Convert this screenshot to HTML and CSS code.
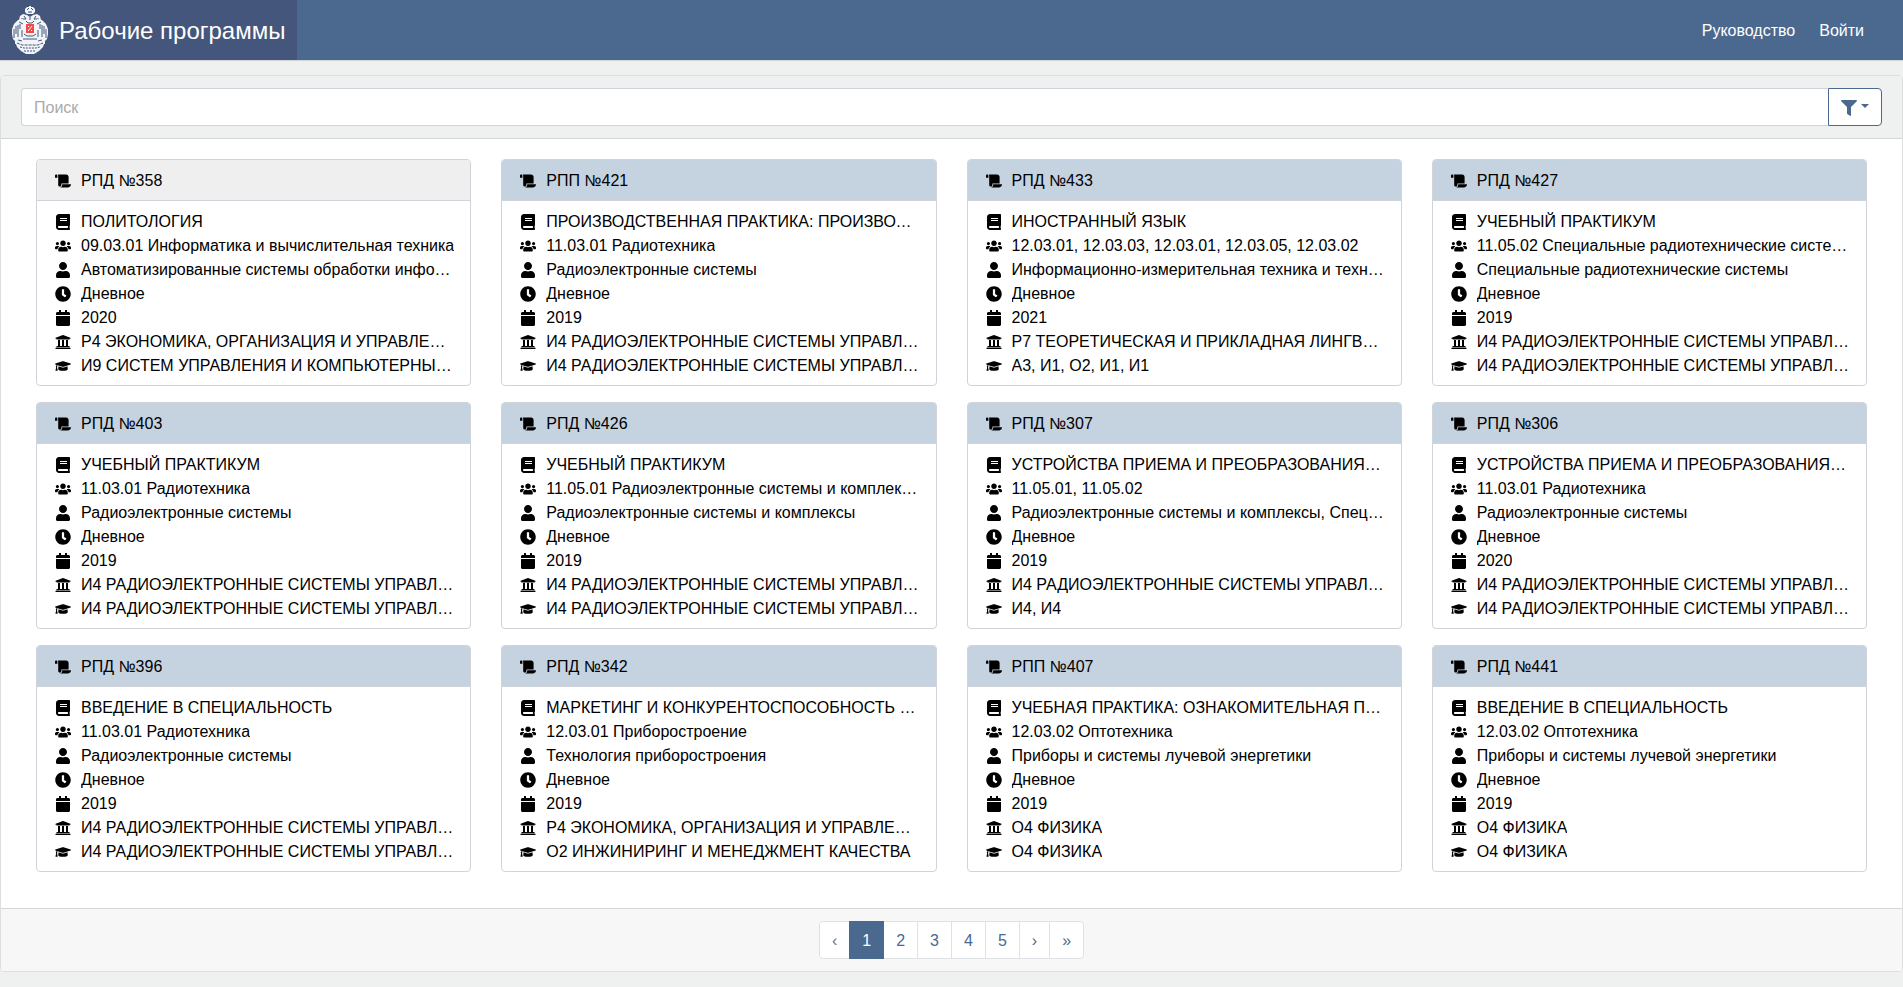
FILE: index.html
```html
<!DOCTYPE html>
<html lang="ru">
<head>
    <meta charset="UTF-8">
    <meta name="viewport" content="width=device-width, initial-scale=1.0">
    <title>Рабочие программы</title>
    <link rel="stylesheet" href="styles.css">
</head>
<body>
    <svg class="sprite" aria-hidden="true">
        <symbol id="scroll" viewBox="0 0 640 512"><path d="M48 0C21.53 0 0 21.53 0 48v64c0 8.84 7.16 16 16 16h80V48C96 21.53 74.47 0 48 0zm208 412.57V352h288V96c0-52.94-43.06-96-96-96H111.59C121.74 13.41 128 29.92 128 48v368c0 38.87 34.65 69.65 74.75 63.12C234.22 474 256 444.46 256 412.57zM288 384v32c0 52.93-43.06 96-96 96h336c61.86 0 112-50.14 112-112 0-8.84-7.16-16-16-16H288z"/></symbol>
        <symbol id="book" viewBox="0 0 448 512"><path d="M448 360V24c0-13.3-10.7-24-24-24H96C43 0 0 43 0 96v320c0 53 43 96 96 96h328c13.3 0 24-10.7 24-24v-16c0-7.5-3.5-14.3-8.9-18.7-4.2-15.4-4.2-59.3 0-74.7 5.4-4.3 8.9-11.1 8.9-18.6zM128 134c0-3.3 2.7-6 6-6h212c3.3 0 6 2.7 6 6v20c0 3.3-2.7 6-6 6H134c-3.3 0-6-2.7-6-6v-20zm0 64c0-3.3 2.7-6 6-6h212c3.3 0 6 2.7 6 6v20c0 3.3-2.7 6-6 6H134c-3.3 0-6-2.7-6-6v-20zm253.4 250H96c-17.7 0-32-14.3-32-32 0-17.6 14.4-32 32-32h285.4c-1.9 17.1-1.9 46.9 0 64z"/></symbol>
        <symbol id="users" viewBox="0 0 640 512"><path d="M96 224c35.3 0 64-28.7 64-64s-28.7-64-64-64-64 28.7-64 64 28.7 64 64 64zm448 0c35.3 0 64-28.7 64-64s-28.7-64-64-64-64 28.7-64 64 28.7 64 64 64zm32 32h-64c-17.6 0-33.5 7.1-45.1 18.6 40.3 22.1 68.9 62 75.1 109.4h66c17.7 0 32-14.3 32-32v-32c0-35.3-28.7-64-64-64zm-256 0c61.9 0 112-50.1 112-112S381.9 32 320 32 208 82.1 208 144s50.1 112 112 112zm76.8 32h-8.3c-20.8 10-43.9 16-68.5 16s-47.6-6-68.5-16h-8.3C179.6 288 128 339.6 128 403.2V432c0 26.5 21.5 48 48 48h288c26.5 0 48-21.5 48-48v-28.8c0-63.6-51.6-115.2-115.2-115.2zm-223.7-13.4C161.5 263.1 145.6 256 128 256H64c-35.3 0-64 28.7-64 64v32c0 17.7 14.3 32 32 32h65.9c6.3-47.4 34.9-87.3 75.2-109.4z"/></symbol>
        <symbol id="user" viewBox="0 0 448 512"><path d="M224 256c70.7 0 128-57.3 128-128S294.7 0 224 0 96 57.3 96 128s57.3 128 128 128zm89.6 32h-16.7c-22.2 10.2-46.9 16-72.9 16s-50.6-5.8-72.9-16h-16.7C60.2 288 0 348.2 0 422.4V464c0 26.5 21.5 48 48 48h352c26.5 0 48-21.5 48-48v-41.6c0-74.2-60.2-134.4-134.4-134.4z"/></symbol>
        <symbol id="clock" viewBox="0 0 512 512"><path d="M256 8C119 8 8 119 8 256s111 248 248 248 248-111 248-248S393 8 256 8zm57.1 350.1L224.9 294c-3.1-2.3-4.9-5.9-4.9-9.7V116c0-6.6 5.4-12 12-12h48c6.6 0 12 5.4 12 12v137.7l63.5 46.2c5.4 3.9 6.5 11.4 2.6 16.8l-28.2 38.8c-3.9 5.3-11.4 6.5-16.8 2.6z"/></symbol>
        <symbol id="calendar" viewBox="0 0 448 512"><path d="M12 192h424c6.6 0 12 5.4 12 12v260c0 26.5-21.5 48-48 48H48c-26.5 0-48-21.5-48-48V204c0-6.6 5.4-12 12-12zm436-44v-36c0-26.5-21.5-48-48-48h-48V12c0-6.6-5.4-12-12-12h-40c-6.6 0-12 5.4-12 12v52H160V12c0-6.6-5.4-12-12-12h-40c-6.6 0-12 5.4-12 12v52H48C21.5 64 0 85.5 0 112v36c0 6.6 5.4 12 12 12h424c6.6 0 12-5.4 12-12z"/></symbol>
        <symbol id="university" viewBox="0 0 512 512"><path d="M496 128v16a8 8 0 0 1-8 8h-24v12c0 6.627-5.373 12-12 12H60c-6.627 0-12-5.373-12-12v-12H24a8 8 0 0 1-8-8v-16a8 8 0 0 1 4.941-7.392l232-88a7.996 7.996 0 0 1 6.118 0l232 88A8 8 0 0 1 496 128zm-24 304H40c-13.255 0-24 10.745-24 24v16a8 8 0 0 0 8 8h464a8 8 0 0 0 8-8v-16c0-13.255-10.745-24-24-24zM96 192v192H60c-6.627 0-12 5.373-12 12v20h416v-20c0-6.627-5.373-12-12-12h-36V192h-64v192h-64V192h-64v192h-64V192H96z"/></symbol>
        <symbol id="cap" viewBox="0 0 640 512"><path d="M622.34 153.2L343.4 67.5c-15.2-4.67-31.6-4.67-46.79 0L17.66 153.2c-23.54 7.23-23.54 38.36 0 45.59l48.63 14.94c-10.67 13.19-17.23 29.28-17.88 46.9C38.78 266.15 32 276.11 32 288c0 10.78 5.68 19.85 13.86 25.65L20.33 428.53C18.11 438.52 25.71 448 35.94 448h56.11c10.24 0 17.84-9.48 15.62-19.47L82.14 313.65C90.32 307.85 96 298.78 96 288c0-11.57-6.47-21.25-15.66-26.87.76-15.02 8.44-28.3 20.69-36.72L296.6 284.5c9.06 2.78 26.44 6.25 46.79 0l278.95-85.7c23.55-7.24 23.55-38.36 0-45.6zM352.79 315.09c-28.53 8.76-52.84 3.92-65.59 0l-145.02-44.55L128 384c0 35.35 85.96 64 192 64s192-28.65 192-64l-14.18-113.47-145.03 44.56z"/></symbol>
        <symbol id="filter" viewBox="0 0 512 512"><path d="M487.976 0H24.028C2.71 0-8.047 25.866 7.058 40.971L192 225.941V432c0 7.831 3.821 15.17 10.237 19.662l80 55.98C298.02 518.69 320 507.493 320 487.98V225.941l184.947-184.97C520.021 25.896 509.338 0 487.976 0z"/></symbol>
    </svg>

    <nav class="navbar">
        <a class="brand" href="#">
            <svg class="logo" viewBox="0 0 36 48" aria-hidden="true">
                <!-- корона -->
                <path class="light" d="M17 0h2v1h2l2 2v3l-2 2h-6l-2-2V3l2-2h2z"/>
                <path class="light" d="M8 10l3-2 4 1 3 2 3-2 4-1 3 2 1 4-3 2H10l-3-2z"/>
                <path class="dark" d="M15 4l2-2M21 4l-2-2M16 6h4M12 10l2 3M24 10l-2 3M9 13h5M22 13h5M18 11v4"/>
                <!-- крылья -->
                <path class="light" d="M11 13L6 14 2 18 0 23v5l1 5 2 2v3h9V20z"/>
                <path class="light" d="M25 13l5 1 4 4 2 5v5l-1 5-2 2v3h-9V20z"/>
                <path class="dark" d="M2 23v9M4 20v8M6 19v13M8 18v5M10 24v8M34 23v9M32 20v8M30 19v13M28 18v5M26 24v8M7 16l4 2M29 16l-4 2"/>
                <!-- венок и лента -->
                <path class="light" d="M3 31h30v4l-2 6-4 4-5 3h-8l-5-3-4-4-2-6z"/>
                <path class="light" d="M11 14h14v17H11z"/>
                <path class="dark" d="M12 28l3 2h6l3-2M14 15l2 2h4l2-2M6 34l4 1M30 34l-4 1M11 33h14"/>
                <path class="dark" stroke-dasharray="3 1" d="M5 37l5 2h16l5-2"/>
                <path class="dark" stroke-dasharray="2 1" d="M8 41l4 1h12l4-1M12 45h12"/>
                <path class="red" d="M14 18h8v9h-8z"/>
                <path class="stroke-light" d="M16 25l4-5M16 20l1 1M19 24l1 1"/>
            </svg>
            <span>Рабочие программы</span>
        </a>
        <div class="nav-links">
            <a href="#">Руководство</a>
            <a href="#">Войти</a>
        </div>
    </nav>

    <main class="panel">
        <form class="search">
            <input type="text" placeholder="Поиск" aria-label="Поиск">
            <button type="button" class="filter-button" aria-label="Фильтр">
                <svg class="icon"><use href="#filter"/></svg>
                <span class="caret"></span>
            </button>
        </form>

        <div class="programs" id="programs">
            <!-- карточки программ -->
        </div>

        <div class="panel-footer">
            <ul class="pagination">
                <li class="disabled"><a href="#">‹</a></li>
                <li class="active"><a href="#">1</a></li>
                <li><a href="#">2</a></li>
                <li><a href="#">3</a></li>
                <li><a href="#">4</a></li>
                <li><a href="#">5</a></li>
                <li><a href="#">›</a></li>
                <li><a href="#">»</a></li>
            </ul>
        </div>
    </main>

    <script>
        const I4 = "И4 РАДИОЭЛЕКТРОННЫЕ СИСТЕМЫ УПРАВЛЕНИЯ";
        const P4 = "Р4 ЭКОНОМИКА, ОРГАНИЗАЦИЯ И УПРАВЛЕНИЕ";
        const icons = ["book", "users", "user", "clock", "calendar", "university", "cap"];

        // номер, дисциплина, направление, профиль, форма, год, кафедры
        const programs = [
            ["РПД №358", "ПОЛИТОЛОГИЯ", "09.03.01 Информатика и вычислительная техника", "Автоматизированные системы обработки информации", "Дневное", "2020", P4, "И9 СИСТЕМ УПРАВЛЕНИЯ И КОМПЬЮТЕРНЫХ ТЕХНОЛОГИЙ"],
            ["РПП №421", "ПРОИЗВОДСТВЕННАЯ ПРАКТИКА: ПРОИЗВОДСТВЕННАЯ", "11.03.01 Радиотехника", "Радиоэлектронные системы", "Дневное", "2019", I4, I4],
            ["РПД №433", "ИНОСТРАННЫЙ ЯЗЫК", "12.03.01, 12.03.03, 12.03.01, 12.03.05, 12.03.02", "Информационно-измерительная техника и технологии", "Дневное", "2021", "Р7 ТЕОРЕТИЧЕСКАЯ И ПРИКЛАДНАЯ ЛИНГВИСТИКА", "А3, И1, О2, И1, И1"],
            ["РПД №427", "УЧЕБНЫЙ ПРАКТИКУМ", "11.05.02 Специальные радиотехнические системы", "Специальные радиотехнические системы", "Дневное", "2019", I4, I4],
            ["РПД №403", "УЧЕБНЫЙ ПРАКТИКУМ", "11.03.01 Радиотехника", "Радиоэлектронные системы", "Дневное", "2019", I4, I4],
            ["РПД №426", "УЧЕБНЫЙ ПРАКТИКУМ", "11.05.01 Радиоэлектронные системы и комплексы", "Радиоэлектронные системы и комплексы", "Дневное", "2019", I4, I4],
            ["РПД №307", "УСТРОЙСТВА ПРИЕМА И ПРЕОБРАЗОВАНИЯ СИГНАЛОВ", "11.05.01, 11.05.02", "Радиоэлектронные системы и комплексы, Специальные", "Дневное", "2019", I4, "И4, И4"],
            ["РПД №306", "УСТРОЙСТВА ПРИЕМА И ПРЕОБРАЗОВАНИЯ СИГНАЛОВ", "11.03.01 Радиотехника", "Радиоэлектронные системы", "Дневное", "2020", I4, I4],
            ["РПД №396", "ВВЕДЕНИЕ В СПЕЦИАЛЬНОСТЬ", "11.03.01 Радиотехника", "Радиоэлектронные системы", "Дневное", "2019", I4, I4],
            ["РПД №342", "МАРКЕТИНГ И КОНКУРЕНТОСПОСОБНОСТЬ ПРОДУКЦИИ", "12.03.01 Приборостроение", "Технология приборостроения", "Дневное", "2019", P4, "О2 ИНЖИНИРИНГ И МЕНЕДЖМЕНТ КАЧЕСТВА"],
            ["РПП №407", "УЧЕБНАЯ ПРАКТИКА: ОЗНАКОМИТЕЛЬНАЯ ПРАКТИКА", "12.03.02 Оптотехника", "Приборы и системы лучевой энергетики", "Дневное", "2019", "О4 ФИЗИКА", "О4 ФИЗИКА"],
            ["РПД №441", "ВВЕДЕНИЕ В СПЕЦИАЛЬНОСТЬ", "12.03.02 Оптотехника", "Приборы и системы лучевой энергетики", "Дневное", "2019", "О4 ФИЗИКА", "О4 ФИЗИКА"]
        ];

        function row(icon, text) {
            return `<svg class="icon"><use href="#${icon}"/></svg><span>${text}</span>`;
        }

        document.getElementById("programs").innerHTML = programs.map(([title, ...fields], i) => `
            <article class="card${i === 0 ? " card-plain" : ""}">
                <header class="row card-header">${row("scroll", title)}</header>
                <ul class="card-body">
                    ${fields.map((text, n) => `<li class="row">${row(icons[n], text)}</li>`).join("")}
                </ul>
            </article>`).join("");
    </script>
</body>
</html>
```
FILE: styles.css
```css
* {
    box-sizing: border-box;
}
body {
    margin: 0;
    background: #eff1f1;
    color: #000;
    font: 16px/24px "Liberation Sans", Arial, sans-serif;
}
a {
    color: #4b698f;
    text-decoration: none;
}
ul {
    list-style: none;
    margin: 0;
    padding: 0;
}
.sprite {
    display: none;
}
.icon {
    width: 16px;
    height: 16px;
    fill: currentColor;
}

/* шапка */
.navbar {
    display: flex;
    align-items: center;
    justify-content: space-between;
    height: 60px;
    background: #4b698f;
    box-shadow: 0 1px 1px rgba(0, 0, 0, 0.1);
}
.brand {
    display: flex;
    align-items: center;
    gap: 11px;
    height: 60px;
    padding: 0 12px;
    background: #44567b;
    color: #fff;
    font-size: 24px;
}
.brand span {
    padding-top: 2px;
}
.logo {
    width: 36px;
    height: 48px;
}
.light {
    fill: #f1f4f8;
}
.dark {
    fill: none;
    stroke: #44567b;
}
.red {
    fill: #f24b46;
}
.stroke-light {
    fill: none;
    stroke: #fff;
}
.nav-links {
    display: flex;
    gap: 24px;
    padding: 2px 39px 0 0;
}
.nav-links a {
    color: #fff;
}

/* панель */
.panel {
    margin: 15px 0;
    background: #fff;
    border: 1px solid #dcdfe0;
    border-radius: 4px;
    overflow: hidden;
}
.search {
    display: flex;
    padding: 12px 20px;
    background: #eff1f1;
    border-bottom: 1px solid #d3d6d9;
}
.search input {
    flex: 1;
    min-width: 0;
    height: 38px;
    padding: 7px 12px 5px;
    border: 1px solid #ced4da;
    border-right: 0;
    border-radius: 4px 0 0 4px;
    background: #fff;
    font: inherit;
}
.search input::placeholder {
    color: #aaa;
}
.filter-button {
    display: flex;
    align-items: center;
    gap: 4px;
    width: 54px;
    height: 38px;
    padding: 2px 12px 0;
    border: 1px solid #4b698f;
    border-radius: 0 4px 4px 0;
    background: #fff;
    color: #4b698f;
}
.caret {
    margin-bottom: 4px;
    border: 4px solid transparent;
    border-top-color: currentColor;
    border-bottom: 0;
}

/* карточки */
.programs {
    display: grid;
    grid-template-columns: repeat(4, minmax(0, 1fr));
    gap: 16px 30px;
    padding: 20px 35px 36px;
}
.card {
    border: 1px solid #d0d3da;
    border-radius: 4px;
    overflow: hidden;
}
.row {
    display: flex;
    gap: 10px;
}
.row .icon {
    flex: none;
    margin-top: 4px;
}
.row span {
    overflow: hidden;
    text-overflow: ellipsis;
    white-space: nowrap;
}
.card-header {
    padding: 9px 16px 7px 18px;
    background: #c5d2e0;
    border-bottom: 1px solid #d0d3da;
}
.card-plain .card-header {
    background: #efefef;
}
.card-body {
    padding: 9px 16px 7px 18px;
}

/* страницы */
.panel-footer {
    display: flex;
    justify-content: center;
    padding: 12px 20px;
    background: #f7f7f7;
    border-top: 1px solid #d3d6d9;
}
.pagination {
    display: flex;
}
.pagination a {
    display: block;
    margin-left: -1px;
    padding: 7px 12px 5px;
    border: 1px solid #dee2e6;
    background: #fff;
}
.pagination li:first-child a {
    margin-left: 0;
    border-radius: 4px 0 0 4px;
}
.pagination li:last-child a {
    border-radius: 0 4px 4px 0;
}
.pagination .disabled a {
    color: #6c757d;
}
.pagination .active a {
    position: relative;
    border-color: #4b698f;
    background: #4b698f;
    color: #fff;
}
```
